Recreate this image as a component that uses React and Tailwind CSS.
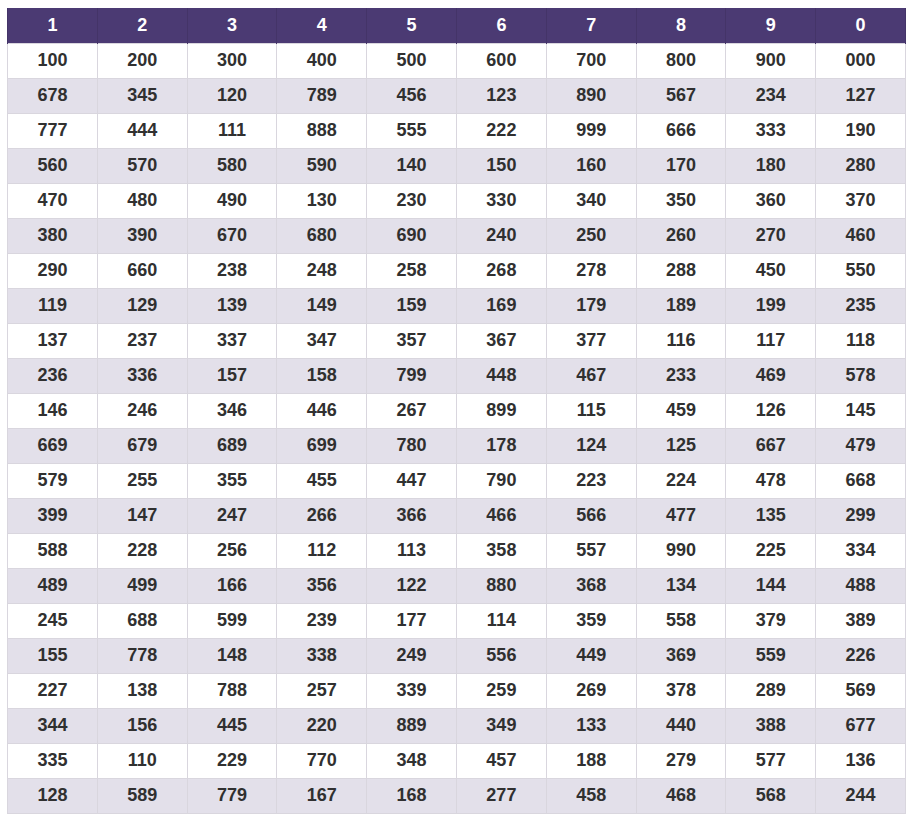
const headers = ['1', '2', '3', '4', '5', '6', '7', '8', '9', '0'];

const rows = [
    ['100', '200', '300', '400', '500', '600', '700', '800', '900', '000'],
    ['678', '345', '120', '789', '456', '123', '890', '567', '234', '127'],
    ['777', '444', '111', '888', '555', '222', '999', '666', '333', '190'],
    ['560', '570', '580', '590', '140', '150', '160', '170', '180', '280'],
    ['470', '480', '490', '130', '230', '330', '340', '350', '360', '370'],
    ['380', '390', '670', '680', '690', '240', '250', '260', '270', '460'],
    ['290', '660', '238', '248', '258', '268', '278', '288', '450', '550'],
    ['119', '129', '139', '149', '159', '169', '179', '189', '199', '235'],
    ['137', '237', '337', '347', '357', '367', '377', '116', '117', '118'],
    ['236', '336', '157', '158', '799', '448', '467', '233', '469', '578'],
    ['146', '246', '346', '446', '267', '899', '115', '459', '126', '145'],
    ['669', '679', '689', '699', '780', '178', '124', '125', '667', '479'],
    ['579', '255', '355', '455', '447', '790', '223', '224', '478', '668'],
    ['399', '147', '247', '266', '366', '466', '566', '477', '135', '299'],
    ['588', '228', '256', '112', '113', '358', '557', '990', '225', '334'],
    ['489', '499', '166', '356', '122', '880', '368', '134', '144', '488'],
    ['245', '688', '599', '239', '177', '114', '359', '558', '379', '389'],
    ['155', '778', '148', '338', '249', '556', '449', '369', '559', '226'],
    ['227', '138', '788', '257', '339', '259', '269', '378', '289', '569'],
    ['344', '156', '445', '220', '889', '349', '133', '440', '388', '677'],
    ['335', '110', '229', '770', '348', '457', '188', '279', '577', '136'],
    ['128', '589', '779', '167', '168', '277', '458', '468', '568', '244'],
];

const App = () => {
    return (
        <div className="bg-white pt-[8px] pl-[7px] font-['Liberation_Sans',Arial,sans-serif]">
            <table className="w-[899px] table-fixed border-collapse border-b border-[#c9c5cf] text-[18px] font-bold">
                <thead>
                    <tr className="h-[35px] bg-[#4b3a73] text-white">
                        {headers.map((h, i) => (
                            <th key={i} className="border-x border-[#443468] p-0 text-center font-bold">
                                {h}
                            </th>
                        ))}
                    </tr>
                </thead>
                <tbody>
                    {rows.map((row, r) => (
                        <tr
                            key={r}
                            className={'h-[35px] text-[#303030] ' + (r % 2 === 1 ? 'bg-[#e3e0ea]' : 'bg-white')}
                        >
                            {row.map((cell, c) => (
                                <td key={c} className="border border-[#d9d6de] p-0 text-center">
                                    {cell}
                                </td>
                            ))}
                        </tr>
                    ))}
                </tbody>
            </table>
        </div>
    );
};

export default App;
